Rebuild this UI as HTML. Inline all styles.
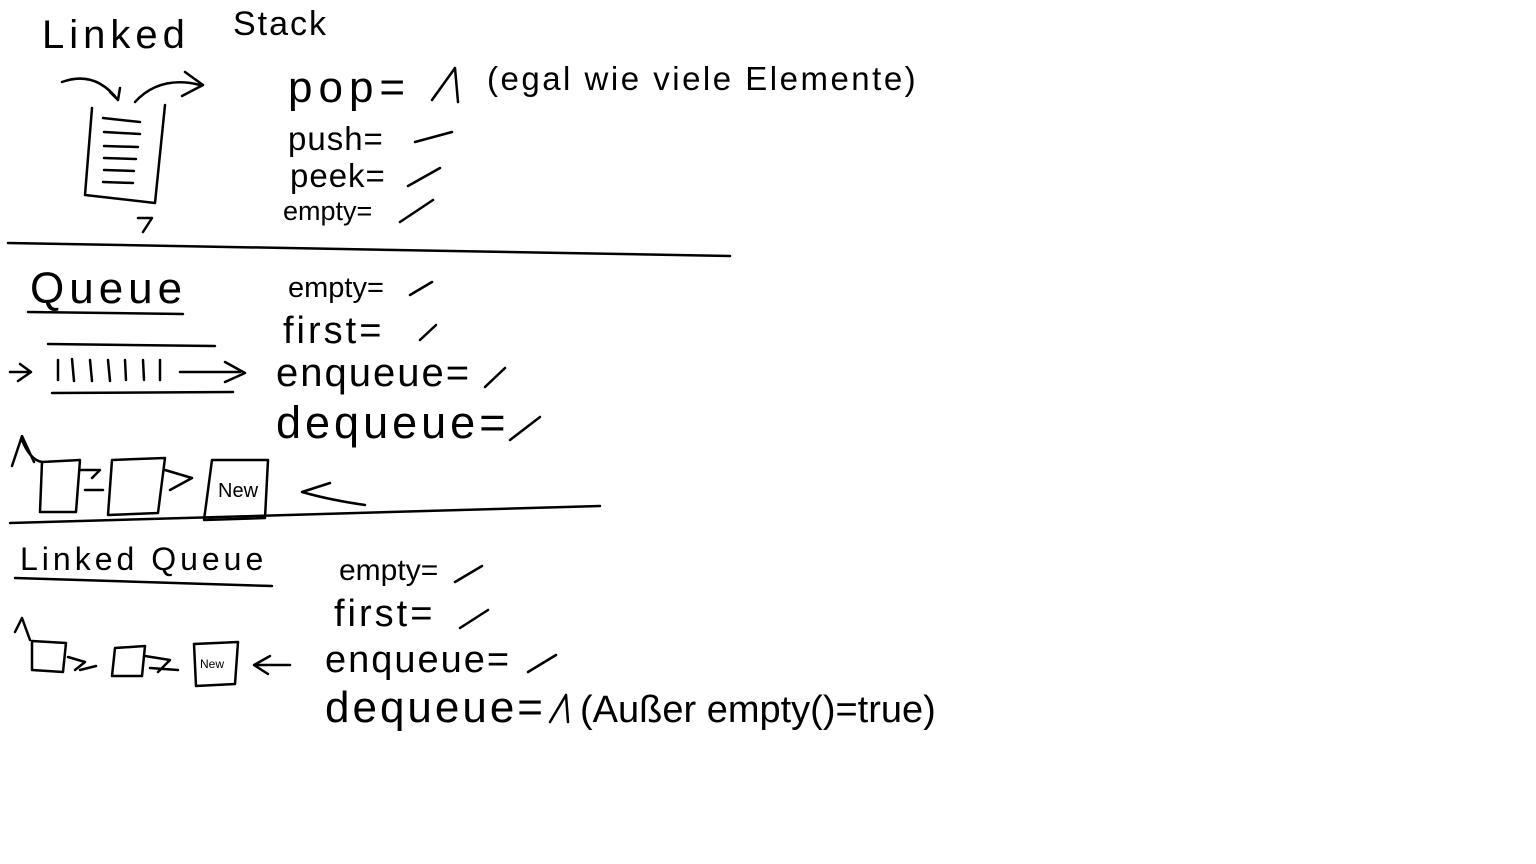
<!DOCTYPE html>
<html><head><meta charset="utf-8"><style>
html,body{margin:0;padding:0;background:#fff;width:1536px;height:864px;overflow:hidden}
svg{display:block}
text{font-family:"Liberation Sans",sans-serif;fill:#000}
</style></head><body>
<svg width="1536" height="864" viewBox="0 0 1536 864" xmlns="http://www.w3.org/2000/svg">
<g fill="none" stroke="#000" stroke-width="2.5" stroke-linecap="round" stroke-linejoin="round">
<path d="M62 82 Q95 70 118 100 M110 92 L118 100 L120 88"/>
<path d="M135 102 Q160 75 200 85 M185 72 L203 85 L182 96"/>
<path d="M92 108 L85 195 L155 203 L165 105"/>
<path d="M103 118 L140 122 M104 132 L140 134 M104 146 L138 147 M104 158 L136 159 M104 170 L134 171 M103 182 L133 183"/>
<path d="M138 218 L152 218 L143 232"/>
<path d="M8 243 L730 256"/>
<path d="M10 523 L600 506"/>
<path d="M415 142 L452 132 M408 186 L440 168 M400 222 L433 200"/>
<path d="M432 100 L455 68 L458 102"/>
<path d="M28 312 L183 314"/>
<path d="M48 344 L215 346 M52 393 L233 392"/>
<path d="M10 372 L30 372 M20 364 L31 372 L18 381 M58 360 L58 380 M72 359 L74 381 M90 360 L92 381 M108 360 L110 381 M125 360 L126 380 M143 360 L144 380 M160 360 L160 380 M180 372 L240 372 M225 362 L245 373 L225 382"/>
<path d="M410 295 L432 282 M420 340 L436 325 M485 387 L505 368 M510 440 L540 417"/>
<path d="M12 466 L22 436 L34 462 M22 440 Q30 460 42 462"/>
<path d="M42 462 L80 460 L76 512 L40 512 Z M80 470 L100 470 L92 478 M85 490 L103 490"/>
<path d="M112 460 L165 458 L158 513 L108 515 Z M165 470 L192 478 L170 490"/>
<path d="M212 460 L268 460 L265 518 L204 520 Z"/>
<path d="M365 505 Q330 500 302 492 L330 483"/>
<path d="M15 578 L272 586"/>
<path d="M455 582 L482 566 M460 628 L488 610 M528 672 L556 655"/>
<path d="M15 632 L22 618 L30 640"/>
<path d="M32 641 L66 643 L63 672 L32 670 Z M68 657 L85 662 L75 670 M80 670 L96 666"/>
<path d="M115 648 L145 646 L142 676 L112 676 Z M145 656 L170 660 L158 672 M150 668 L178 670"/>
<path d="M194 644 L238 642 L235 684 L196 686 Z"/>
<path d="M290 665 L258 665 M270 656 L254 665 L268 674"/>
<path d="M550 722 L566 695 L568 722"/>
</g>
<text x="42" y="48" font-size="40" letter-spacing="5">Linked</text>
<text x="233" y="35" font-size="34" letter-spacing="2">Stack</text>
<text x="288" y="102" font-size="44" letter-spacing="6">pop=</text>
<text x="487" y="90" font-size="33" letter-spacing="2.5">(egal wie viele Elemente)</text>
<text x="288" y="150" font-size="33" letter-spacing="1">push=</text>
<text x="290" y="187" font-size="33" letter-spacing="1">peek=</text>
<text x="283" y="220" font-size="27">empty=</text>
<text x="30" y="303" font-size="44" letter-spacing="5">Queue</text>
<text x="288" y="297" font-size="29">empty=</text>
<text x="283" y="343" font-size="38" letter-spacing="3">first=</text>
<text x="276" y="386" font-size="40" letter-spacing="2">enqueue=</text>
<text x="276" y="438" font-size="45" letter-spacing="4">dequeue=</text>
<text x="218" y="497" font-size="20">New</text>
<text x="20" y="570" font-size="32" letter-spacing="4">Linked Queue</text>
<text x="339" y="580" font-size="30">empty=</text>
<text x="334" y="626" font-size="38" letter-spacing="3">first=</text>
<text x="325" y="672" font-size="38" letter-spacing="2">enqueue=</text>
<text x="325" y="722" font-size="44" letter-spacing="3">dequeue=</text>
<text x="580" y="722" font-size="38">(Außer empty()=true)</text>
<text x="200" y="668" font-size="12">New</text>
</svg>
</body></html>
